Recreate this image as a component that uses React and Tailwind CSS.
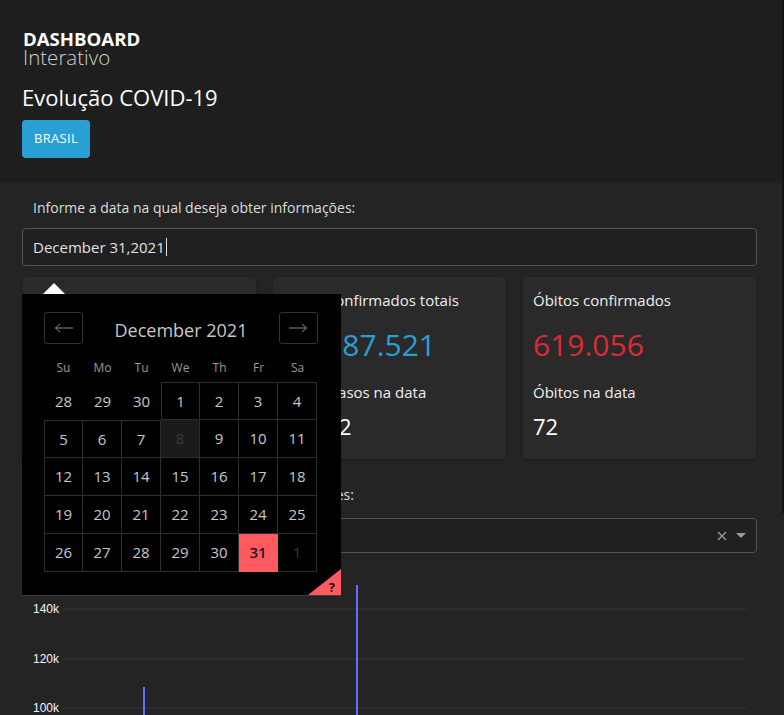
import React from "react";
import clsx from "clsx";

const weeks = [
  [28, 29, 30, 1, 2, 3, 4],
  [5, 6, 7, 8, 9, 10, 11],
  [12, 13, 14, 15, 16, 17, 18],
  [19, 20, 21, 22, 23, 24, 25],
  [26, 27, 28, 29, 30, 31, 1],
];

function Day({ r, c, d }) {
  const outside = r === 0 && c < 3;
  const nextMonth = r === 4 && c === 6;
  const blocked = r === 1 && c === 3;
  const selected = r === 4 && c === 5;
  const top = r === 0 || (r === 1 && c < 3);
  const left = c === 0 ? r >= 1 : r === 0 && c === 3;
  return (
    <div
      className={clsx(
        "w-[39px] h-[38px] flex items-center justify-center text-[15px]",
        !outside && "border-[#2e2e2e] border-r border-b",
        !outside && top && "border-t",
        !outside && left && "border-l",
        selected
          ? "bg-[#ff5a5f] text-[#1a1a1a] font-semibold border-[#ff5a5f]"
          : blocked
          ? "bg-[#1b1b1b] text-[#3a3a3a]"
          : nextMonth
          ? "text-[#3a3a3a]"
          : "text-[#c8c8c8]"
      )}
    >
      {d}
    </div>
  );
}

function Arrow({ dir }) {
  return (
    <svg width="20" height="10" viewBox="0 0 20 10" fill="none" stroke="#8a8a8a" strokeWidth="1">
      {dir === "left" ? (
        <path d="M1.5 5 H19 M6 1 L1.5 5 L6 9" />
      ) : (
        <path d="M1 5 H18.5 M14 1 L18.5 5 L14 9" />
      )}
    </svg>
  );
}

function Card({ title, value, valueClass, subtitle, sub }) {
  return (
    <div className="h-[182px] bg-[#2a2a2a] rounded-[4px] px-[10px] pt-[12px] shadow-[0_1px_3px_rgba(0,0,0,0.25)]">
      <div className="text-[15px] leading-[22px] text-[#eee]">{title}</div>
      <div className={clsx("mt-[14px] text-[30px] leading-[40px]", valueClass)}>{value}</div>
      <div className="mt-[16px] text-[15px] leading-[22px] text-[#eee]">{subtitle}</div>
      <div className="mt-[8px] text-[22px] leading-[30px] text-white">{sub}</div>
    </div>
  );
}

export default function App() {
  return (
    <div className="relative h-[715px] w-[784px] overflow-hidden bg-[#242424] text-white font-['Open_Sans',sans-serif]">
      {/* header */}
      <div className="h-[183px] bg-[#1e1e1e] px-[22px] pt-[30px]">
        <div className="ml-[1px] text-[18.6px] font-bold leading-[17px]">DASHBOARD</div>
        <div className="ml-[1px] text-[20.5px] font-light leading-[20px] text-[#d0d0d0]">Interativo</div>
        <div className="mt-[17px] text-[22px] leading-[26px]">Evolução COVID-19</div>
        <button className="mt-[10px] h-[38px] px-[12px] rounded-[4px] bg-[#2a9fd6] text-[13px] text-white tracking-[0.3px]">
          BRASIL
        </button>
      </div>

      {/* main */}
      <div className="px-[22px] pt-[15px]">
        <div className="ml-[11px] text-[14px] leading-[20px] text-[#dcdcdc]">
          Informe a data na qual deseja obter informações:
        </div>
        <div className="mt-[10px] w-[735px] h-[38px] flex items-center pl-[10px] border border-[#555] rounded-[4px] bg-[#202020] text-[15px] text-[#e0e0e0]">
          December 31,2021
          <span className="ml-[1px] w-px h-[18px] bg-[#e0e0e0]" />
        </div>

        <div className="mt-[11px] ml-[1px] w-[733px] grid grid-cols-3 gap-[17px]">
          <Card
            title="Casos recuperados"
            value="21.552.163"
            valueClass="text-[#77b300]"
            subtitle="Recuperados na data"
            sub="8.315"
          />
          <Card
            title="Casos confirmados totais"
            value="22.287.521"
            valueClass="text-[#2a9fd6]"
            subtitle="Novos casos na data"
            sub="10.762"
          />
          <Card
            title="Óbitos confirmados"
            value="619.056"
            valueClass="text-[#de2a33]"
            subtitle="Óbitos na data"
            sub="72"
          />
        </div>

        <div className="mt-[26px] ml-[11px] text-[14px] leading-[20px] text-[#dcdcdc]">
          Informe o país no qual deseja obter informações:
        </div>
        <div className="mt-[13px] w-[735px] h-[35px] flex items-center justify-end pr-[10px] gap-[8px] border border-[#555] rounded-[4px] bg-[#202020]">
          <svg width="12" height="12" viewBox="0 0 12 12" stroke="#9a9a9a" strokeWidth="1.4">
            <path d="M2 2 L10 10 M10 2 L2 10" />
          </svg>
          <span className="w-0 h-0 border-t-[5px] border-x-[5px] border-x-transparent border-t-[#9a9a9a]" />
        </div>

        <svg width="735" height="163" className="block" style={{ overflow: "visible" }}>
          {[56, 106, 155].map((y, i) => (
            <g key={y}>
              <line x1="40" x2="725" y1={y} y2={y} stroke="#283442" strokeWidth="1" />
              <text
                x="37"
                y={y + 4}
                textAnchor="end"
                fontSize="12"
                fill="#f2f5fa"
                fontFamily="'Liberation Sans', Arial, sans-serif"
              >
                {["140k", "120k", "100k"][i]}
              </text>
            </g>
          ))}
          <rect x="121" y="134" width="2" height="40" fill="#636efa" />
          <rect x="334" y="32" width="2" height="140" fill="#636efa" />
        </svg>
      </div>

      {/* right edge strip */}
      <div className="absolute right-0 top-0 w-[2px] h-[513px] bg-[#111]" />

      {/* date picker popup */}
      <div className="absolute left-[22px] top-[294px] w-[319px] h-[302px] bg-black border-b border-[#3a3a3a] pl-[22px] pt-[18px]">
        <span className="absolute -top-[11px] left-[21px] w-0 h-0 border-b-[11px] border-x-[11px] border-x-transparent border-b-white" />
        <div className="w-[274px] h-[32px] flex items-center justify-between">
          <div className="w-[39px] h-[32px] flex items-center justify-center border border-[#333] rounded-[3px]">
            <Arrow dir="left" />
          </div>
          <div className="pt-[4px] text-[18px] text-[#c8c8c8] leading-[24px]">December 2021</div>
          <div className="w-[39px] h-[32px] flex items-center justify-center border border-[#333] rounded-[3px]">
            <Arrow dir="right" />
          </div>
        </div>
        <div className="mt-[16px] h-[16px] flex text-[12px] leading-[16px] text-[#999]">
          {["Su", "Mo", "Tu", "We", "Th", "Fr", "Sa"].map((w) => (
            <div key={w} className="w-[39px] text-center">
              {w}
            </div>
          ))}
        </div>
        <div className="mt-[6px] flex flex-col">
          {weeks.map((row, r) => (
            <div key={r} className="flex">
              {row.map((d, c) => (
                <Day key={c} r={r} c={c} d={d} />
              ))}
            </div>
          ))}
        </div>
        <div className="absolute right-0 bottom-0 w-0 h-0 border-t-[26px] border-r-[33px] border-t-transparent border-r-[#ff5a5f]" />
        <span className="absolute right-[6px] bottom-0 text-[13px] font-bold leading-[16px] text-[#111]">?</span>
      </div>
    </div>
  );
}
